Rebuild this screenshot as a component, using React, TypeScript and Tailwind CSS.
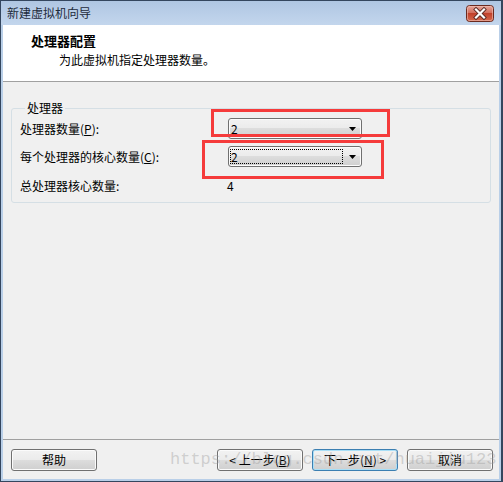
import React from "react";

const BTN_BG =
  "bg-[linear-gradient(#f2f2f2_0%,#ebebeb_50%,#dddddd_50%,#cfcfcf_100%)]";

function CloseGlyph() {
  return (
    <svg width="28" height="17" viewBox="0 0 28 17">
      <defs>
        <linearGradient id="closeBg" x1="0" y1="0" x2="0" y2="1">
          <stop offset="0" stopColor="#e8a89c" />
          <stop offset="0.45" stopColor="#d3705f" />
          <stop offset="0.5" stopColor="#c2412b" />
          <stop offset="1" stopColor="#d66b4f" />
        </linearGradient>
      </defs>
      <rect x="0.5" y="0.5" width="27" height="16" rx="3" fill="url(#closeBg)" stroke="#6b2a1f" />
      <rect x="1.5" y="1.5" width="25" height="14" rx="2" fill="none" stroke="#f0c2b8" strokeOpacity="0.6" />
      <path d="M10 4.5 L18 12.5 M18 4.5 L10 12.5" stroke="#5a2a24" strokeWidth="4" strokeLinecap="square" />
      <path d="M10 4.5 L18 12.5 M18 4.5 L10 12.5" stroke="#ffffff" strokeWidth="2.2" strokeLinecap="square" />
    </svg>
  );
}

function Arrow() {
  return (
    <svg width="7" height="4" viewBox="0 0 7 4" className="ml-auto mr-[5px] shrink-0">
      <path d="M0 0 H7 L3.5 4 Z" fill="#000" />
    </svg>
  );
}

function Combo({ focused }: { focused?: boolean }) {
  return (
    <div
      className={`flex h-[21px] w-[134px] items-center rounded-[3px] border border-[#707070] ${BTN_BG} shadow-[inset_0_0_0_1px_#fbfbfb]`}
    >
      <div
        className={
          focused
            ? "ml-[1px] flex h-[15px] w-[113px] items-center border border-dotted border-black text-[12px] leading-[15px]"
            : "ml-[1px] flex h-[15px] w-[113px] items-center border border-transparent text-[12px] leading-[15px]"
        }
      >
        2
      </div>
      <Arrow />
    </div>
  );
}

function Button({
  children,
  primary,
}: {
  children: React.ReactNode;
  primary?: boolean;
}) {
  return (
    <div
      className={
        primary
          ? `flex h-[22px] w-[86px] items-center justify-center rounded-[3px] border border-[#3c7fb1] ${BTN_BG} shadow-[inset_0_0_0_1px_#a9dff7] text-[12px] leading-[16px]`
          : `flex h-[22px] w-[86px] items-center justify-center rounded-[3px] border border-[#707070] ${BTN_BG} shadow-[inset_0_0_0_1px_#fbfbfb] text-[12px] leading-[16px]`
      }
    >
      {children}
    </div>
  );
}

export default function App() {
  return (
    <div className="relative flex h-[482px] w-[503px] flex-col border-t border-b border-l border-r-2 border-[#34465e] bg-[#b9cfe8] font-[family-name:'Noto_Sans_CJK_SC',sans-serif] text-black">
      {/* title bar */}
      <div className="flex h-[24px] shrink-0 items-start bg-[linear-gradient(#afc6e2,#c3d6ed)] pl-[6px] pr-[7px]">
        <span className="mt-[4px] text-[12px] leading-[16px] text-[#1e2b3c]">新建虚拟机向导</span>
        <div className="ml-auto mt-[4px] flex">
          <CloseGlyph />
        </div>
      </div>

      {/* client area */}
      <div className="mx-[2px] mb-[2px] flex flex-1 flex-col bg-[#f0f0f0]">
        {/* header */}
        <div className="h-[57px] shrink-0 border-b border-[#a0a0a0] bg-white pl-[28px] pt-[8px]">
          <div className="text-[13px] font-bold leading-[16px]">处理器配置</div>
          <div className="mt-[3px] pl-[28px] text-[12px] leading-[16px]">为此虚拟机指定处理器数量。</div>
        </div>

        {/* body */}
        <div className="flex-1 px-[8px] pt-[18px]">
          <fieldset className="rounded-[3px] border border-[#d5dfe5] pb-[8px] pl-[8px] pt-[2px]">
            <legend className="ml-[5px] px-[2px] text-[12px] leading-[16px]">处理器</legend>
            <div className="flex h-[21px] items-center">
              <span className="w-[208px] text-[12px] leading-[16px]">
                处理器数量(<span className="underline">P</span>):
              </span>
              <Combo />
            </div>
            <div className="mt-[7px] flex h-[21px] items-center">
              <span className="w-[208px] text-[12px] leading-[16px]">
                每个处理器的核心数量(<span className="underline">C</span>):
              </span>
              <Combo focused />
            </div>
            <div className="mt-[11px] flex h-[16px] items-center">
              <span className="w-[207px] text-[12px] leading-[16px]">总处理器核心数量:</span>
              <span className="text-[12px] leading-[16px]">4</span>
            </div>
          </fieldset>
        </div>

        {/* footer */}
        <div className="flex h-[40px] shrink-0 items-start border-t border-[#a0a0a0] pl-[8px] pr-[6px] pt-[9px]">
          <Button>帮助</Button>
          <div className="ml-auto flex gap-[9px]">
            <Button>
              &lt; 上一步(<span className="underline">B</span>)
            </Button>
            <Button primary>
              下一步(<span className="underline">N</span>) &gt;
            </Button>
            <Button>取消</Button>
          </div>
        </div>
      </div>

      {/* annotation boxes drawn over the dialog */}
      <div className="pointer-events-none absolute left-[210px] top-[108px] h-[28px] w-[179px] border-[3px] border-[#f53b3b]" />
      <div className="pointer-events-none absolute left-[201px] top-[139px] h-[39px] w-[182px] border-[3px] border-[#f53b3b]" />

      {/* watermark */}
      <div className="pointer-events-none absolute left-[169px] top-[448px] font-[family-name:'Liberation_Mono',monospace] text-[17px] leading-[22px] text-[#9a9a9a]/40">
        https://blog.csdn.net/huaijiu123
      </div>
    </div>
  );
}
